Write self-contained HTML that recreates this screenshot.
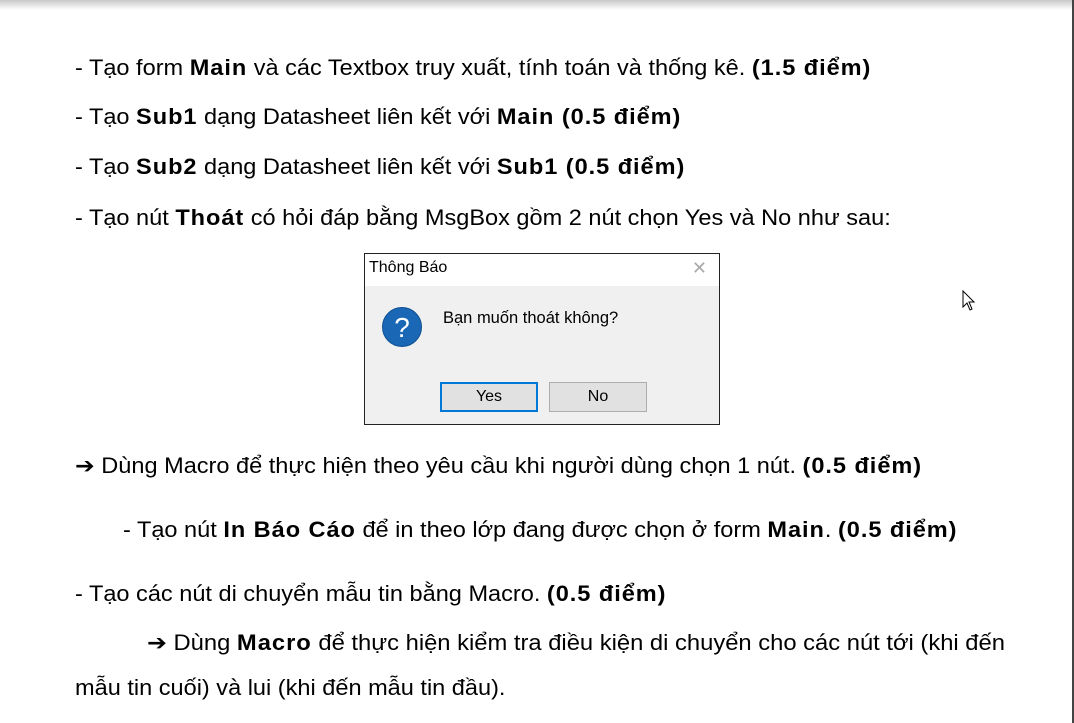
<!DOCTYPE html>
<html><head><meta charset="utf-8"><style>
body{margin:0;width:1074px;height:723px;background:#fff;overflow:hidden;position:relative;font-family:"Liberation Sans","DejaVu Sans",sans-serif;color:#000}
.top{position:absolute;left:0;top:0;width:1074px;height:10px;background:linear-gradient(#c8c8c8,#fff)}
.rb{position:absolute;right:0;top:0;width:2px;height:723px;background:#444}
.l{position:absolute;left:75px;font-size:22px;white-space:nowrap;line-height:26px;transform:scaleX(1.07);transform-origin:0 0;margin-top:1px}
b{font-weight:bold;letter-spacing:0.9px}
.dlg{position:absolute;left:364px;top:253px;width:354px;height:170px;border:1px solid #222;background:#f0f0f0;font-size:16.5px}
.tb{height:32px;background:#fff;position:relative}
.tb span{position:absolute;left:4px;top:5px;font-size:16px}
.x{position:absolute;right:12px;top:4px;color:#aaa;font-size:18px}
.ic{position:absolute;left:17px;top:53px;width:40px;height:40px;border-radius:50%;background:#1a67b6;border:1px solid #0d4f91;color:#fff;font-size:28px;text-align:center;line-height:40px;box-sizing:border-box}
.msg{position:absolute;left:78px;top:55px}
.btn{position:absolute;top:128px;height:30px;width:98px;background:#e1e1e1;border:1px solid #adadad;box-sizing:border-box;text-align:center;line-height:28px;font-size:16px}
</style></head><body>
<div class="top"></div><div class="rb"></div>
<div class="l" style="top:54px">- Tạo form <b>Main</b> và các Textbox truy xuất, tính toán và thống kê. <b>(1.5 điểm)</b></div>
<div class="l" style="top:103px">- Tạo <b>Sub1</b> dạng Datasheet liên kết với <b>Main (0.5 điểm)</b></div>
<div class="l" style="top:153px">- Tạo <b>Sub2</b> dạng Datasheet liên kết với <b>Sub1 (0.5 điểm)</b></div>
<div class="l" style="top:204px">- Tạo nút <b>Thoát</b> có hỏi đáp bằng MsgBox gồm 2 nút chọn Yes và No như sau:</div>
<div class="dlg">
<div class="tb"><span>Thông Báo</span><div class="x">✕</div></div>
<div class="ic">?</div>
<div class="msg">Bạn muốn thoát không?</div>
<div class="btn" style="left:75px;border:2px solid #0078d7;line-height:26px">Yes</div>
<div class="btn" style="left:184px">No</div>
</div>
<div class="l" style="top:452px">➔ Dùng Macro để thực hiện theo yêu cầu khi người dùng chọn 1 nút. <b>(0.5 điểm)</b></div>
<div class="l" style="top:516px;left:123px">- Tạo nút <b>In Báo Cáo</b> để in theo lớp đang được chọn ở form <b>Main</b>. <b>(0.5 điểm)</b></div>
<div class="l" style="top:580px">- Tạo các nút di chuyển mẫu tin bằng Macro. <b>(0.5 điểm)</b></div>
<div class="l" style="top:629px;left:147px;transform:scaleX(1.08)">➔ Dùng <b>Macro</b> để thực hiện kiểm tra điều kiện di chuyển cho các nút tới (khi đến</div>
<div class="l" style="top:674px">mẫu tin cuối) và lui (khi đến mẫu tin đầu).</div>
<svg style="position:absolute;left:962px;top:290px" width="14" height="22"><path d="M1 1 L1 17 L5 13 L8 20 L10 19 L7 12 L12 12 Z" fill="#fff" stroke="#000"/></svg>
</body></html>
